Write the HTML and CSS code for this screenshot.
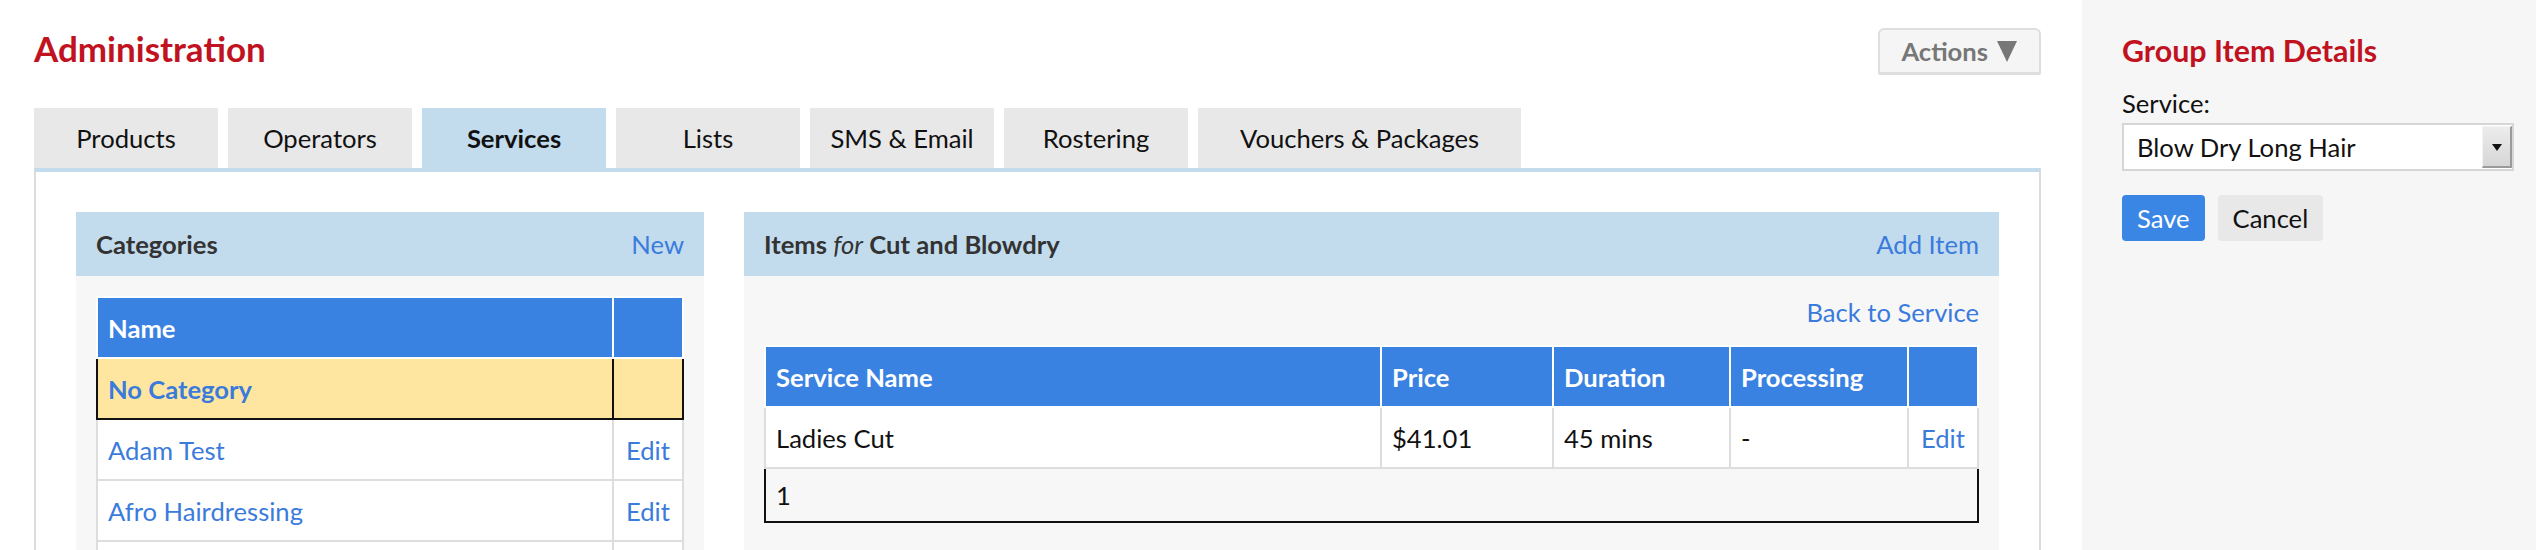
FILE: index.html
```html
<!DOCTYPE html>
<html>
<head>
    <meta charset="utf-8">
    <meta name="viewport" content="initial-scale=1, width=device-width">
    <link rel="stylesheet" href="styles.css">
</head>
<body>
    <div class="page">
        <div class="main">
            <div class="page-header">
                <h1 class="page-title">Administration</h1>
                <div class="actions-button">
                    Actions
                    <svg class="actions-caret" width="20" height="21" viewBox="0 0 20 21"><polygon points="0,0 20,0 10,21" fill="#777"/></svg>
                </div>
            </div>

            <div class="tabs">
                <div class="tab">Products</div>
                <div class="tab">Operators</div>
                <div class="tab tab-active">Services</div>
                <div class="tab">Lists</div>
                <div class="tab">SMS &amp; Email</div>
                <div class="tab">Rostering</div>
                <div class="tab tab-wide">Vouchers &amp; Packages</div>
            </div>

            <div class="tab-panel">
                <!-- categories -->
                <div class="box box-categories">
                    <div class="box-header">
                        <span class="box-title">Categories</span>
                        <a class="link" href="#">New</a>
                    </div>
                    <div class="box-body">
                        <table class="grid">
                            <tr>
                                <th>Name</th>
                                <th class="col-action"></th>
                            </tr>
                            <tr class="row-selected">
                                <td><a class="link" href="#">No Category</a></td>
                                <td class="col-action"></td>
                            </tr>
                            <tr>
                                <td><a class="link" href="#">Adam Test</a></td>
                                <td class="col-action"><a class="link" href="#">Edit</a></td>
                            </tr>
                            <tr>
                                <td><a class="link" href="#">Afro Hairdressing</a></td>
                                <td class="col-action"><a class="link" href="#">Edit</a></td>
                            </tr>
                            <tr>
                                <td></td>
                                <td class="col-action"></td>
                            </tr>
                        </table>
                    </div>
                </div>

                <!-- items of the selected service -->
                <div class="box box-items">
                    <div class="box-header">
                        <span class="box-title">Items <em>for</em> Cut and Blowdry</span>
                        <a class="link" href="#">Add Item</a>
                    </div>
                    <div class="box-body">
                        <div class="back-link"><a class="link" href="#">Back to Service</a></div>
                        <table class="grid">
                            <tr>
                                <th>Service Name</th>
                                <th class="col-price">Price</th>
                                <th class="col-duration">Duration</th>
                                <th class="col-processing">Processing</th>
                                <th class="col-action"></th>
                            </tr>
                            <tr>
                                <td>Ladies Cut</td>
                                <td>$41.01</td>
                                <td>45 mins</td>
                                <td>-</td>
                                <td class="col-action"><a class="link" href="#">Edit</a></td>
                            </tr>
                            <tr class="grid-footer">
                                <td colspan="5">1</td>
                            </tr>
                        </table>
                    </div>
                </div>
            </div>
        </div>

        <div class="sidebar">
            <h2 class="sidebar-title">Group Item Details</h2>
            <div class="field-label">Service:</div>
            <div class="select">
                <span class="select-value">Blow Dry Long Hair</span>
                <span class="select-arrow"></span>
            </div>
            <div class="form-buttons">
                <div class="button button-primary">Save</div>
                <div class="button">Cancel</div>
            </div>
        </div>
    </div>
</body>
</html>
```

FILE: styles.css
```css
body {
    margin: 0;
    font-family: 'Lato', 'Noto Sans', sans-serif;
    font-size: 25.6px;
    color: #111;
    background-color: #fff;
}
.page {
    display: flex;
    height: 100vh;
    overflow: hidden;
}
.main {
    flex: 1;
    padding: 28px 41px 0 34px;
}
.page-header {
    display: flex;
    justify-content: space-between;
    align-items: flex-start;
}
.page-title {
    margin: 0;
    font-size: 35px;
    line-height: 40px;
    font-weight: 700;
    color: #c1121f;
}
.actions-button {
    display: flex;
    align-items: center;
    gap: 9px;
    box-sizing: border-box;
    height: 47px;
    padding: 0 22px 0 21px;
    border: 2px solid #dedede;
    border-bottom-width: 3px;
    border-radius: 6px 6px 2px 2px;
    background-color: #f5f5f5;
    color: #777;
    font-weight: 700;
}
.tabs {
    display: flex;
    gap: 10px;
    margin-top: 33px;
}
.tab {
    display: flex;
    align-items: center;
    justify-content: center;
    box-sizing: border-box;
    min-width: 184px;
    height: 60px;
    padding: 0 20px;
    background-color: #e8e8e8;
}
.tab-active {
    background-color: #c2dcee;
    font-weight: 700;
}
.tab-wide {
    padding: 0 42px;
}
.tab-panel {
    display: flex;
    gap: 40px;
    padding: 40px;
    border: 2px solid #dcdcdc;
    border-top: 4px solid #c2dcee;
    border-bottom: none;
    min-height: 400px;
}
.box {
    display: flex;
    flex-direction: column;
    background-color: #f7f7f7;
}
.box-categories {
    width: 628px;
    flex-shrink: 0;
}
.box-items {
    flex: 1;
}
.box-header {
    display: flex;
    justify-content: space-between;
    align-items: center;
    height: 64px;
    padding: 0 20px;
    background-color: #c2dcee;
}
.box-title {
    font-weight: 700;
    color: #333;
}
.box-title em {
    font-weight: 400;
}
.box-body {
    padding: 20px;
}
.back-link {
    text-align: right;
    line-height: 32px;
    margin-bottom: 17px;
}
.link {
    color: #3a7bdc;
    text-decoration: none;
}
.grid {
    width: 100%;
    border-collapse: collapse;
}
.grid th {
    height: 59px;
    padding: 0 10px;
    border: 2px solid #fff;
    background-color: #3a82e2;
    color: #fff;
    font-weight: 700;
    text-align: left;
}
.grid td {
    height: 59px;
    padding: 0 10px;
    border: 2px solid #ddd;
    background-color: #fff;
}
.grid .col-action {
    width: 48px;
    text-align: center;
}
.grid .col-price {
    width: 150px;
}
.grid .col-duration {
    width: 155px;
}
.grid .col-processing {
    width: 156px;
}
.row-selected td {
    background-color: #ffe6a0;
    border-color: #111;
    font-weight: 700;
}
.grid-footer td {
    height: 52px;
    background-color: transparent;
    border-color: #111;
}
.sidebar {
    width: 454px;
    flex-shrink: 0;
    box-sizing: border-box;
    padding: 33px 22px 0 40px;
    background-color: #f6f6f6;
}
.sidebar-title {
    margin: 0;
    font-size: 30.4px;
    line-height: 35px;
    font-weight: 700;
    color: #c1121f;
}
.field-label {
    margin-top: 21px;
    line-height: 29px;
}
.select {
    display: flex;
    align-items: center;
    box-sizing: border-box;
    height: 48px;
    margin-top: 5px;
    padding: 1px 0 1px 13px;
    border: 2px solid #d6d6d6;
    background-color: #fff;
}
.select-value {
    flex: 1;
}
.select-arrow {
    position: relative;
    align-self: stretch;
    box-sizing: border-box;
    width: 30px;
    border-top: 1px solid #f4f4f4;
    border-left: 1px solid #f4f4f4;
    border-right: 2px solid #9a9a9a;
    border-bottom: 2px solid #9a9a9a;
    background: linear-gradient(#ececec, #d6d6d6);
}
.select-arrow::after {
    content: '';
    position: absolute;
    left: 9px;
    top: 17px;
    border-top: 7px solid #111;
    border-left: 5px solid transparent;
    border-right: 5px solid transparent;
}
.form-buttons {
    display: flex;
    gap: 13px;
    margin-top: 24px;
}
.button {
    display: flex;
    align-items: center;
    height: 46px;
    padding: 0 15px;
    border-radius: 4px;
    background-color: #e8e8e8;
    cursor: pointer;
}
.button-primary {
    background-color: #3a86e4;
    color: #fff;
}
```
